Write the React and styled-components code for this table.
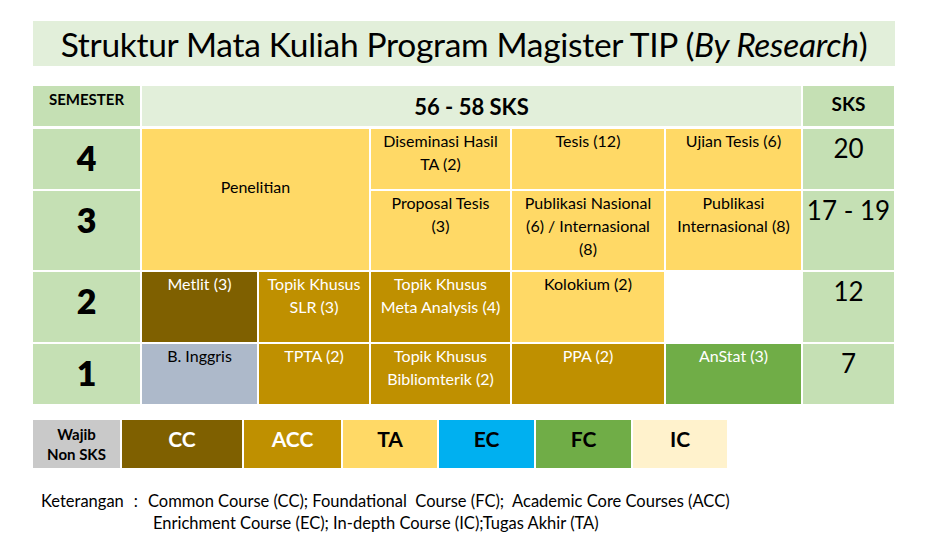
import React from 'react';
import styled, { createGlobalStyle } from 'styled-components';

const GlobalStyle = createGlobalStyle`
  body {
    margin: 0;
    background: #ffffff;
    font-family: Lato, "Open Sans", sans-serif;
    color: #000;
  }
`;

const colors = {
  cc: '#7F6000',
  acc: '#BF9000',
  ta: '#FFD966',
  ec: '#00B0F0',
  fc: '#70AD47',
  ic: '#FFF2CC',
  eng: '#ADB9CA',
  wajib: '#C9C9C9',
  sem: '#C5E0B4',
  head: '#E2EFDA',
  none: '#FFFFFF',
};

const Page = styled.div`
  width: 862px;
  padding: 21px 0 0 33px;
`;

const TitleBand = styled.h1`
  margin: 0;
  height: 45px;
  background: ${colors.head};
  display: flex;
  align-items: center;
  justify-content: center;
  font-weight: 400;
  font-size: 33.5px;
  letter-spacing: -0.3px;
  line-height: 1;
  padding-top: 2px;
  box-sizing: border-box;

  em {
    font-style: italic;
  }
`;

const Table = styled.div`
  margin-top: 20px;
  display: grid;
  grid-template-columns: 107px 115px 110px 139px 152px 135px 91px;
  grid-template-rows: 41px 60px 79px 70px 60px;
  row-gap: 2px;
  column-gap: 2px;
  background: #fff;
`;

const HeadCell = styled.div`
  background: ${(p) => p.bg};
  grid-column: ${(p) => p.col || 'auto'};
  display: flex;
  justify-content: center;
  align-items: ${(p) => (p.center ? 'center' : 'flex-start')};
  font-weight: 700;
  font-size: ${(p) => p.size}px;
  padding-top: ${(p) => p.pt || 0}px;
  box-sizing: border-box;
  margin-bottom: 1px;
`;

const SemCell = styled.div`
  background: ${colors.sem};
  grid-column: 1;
  display: flex;
  justify-content: center;
  font-weight: 800;
  font-size: 34px;
  line-height: 1;
  padding-top: 12px;
  box-sizing: border-box;
`;

const SksCell = styled.div`
  background: ${colors.sem};
  grid-column: 7;
  display: flex;
  justify-content: center;
  font-size: 26px;
  line-height: 1;
  padding-top: 6px;
  box-sizing: border-box;
`;

const Course = styled.div`
  background: ${(p) => colors[p.kind]};
  color: ${(p) => (p.light ? '#ffffff' : '#000000')};
  grid-column: ${(p) => p.col};
  grid-row: ${(p) => p.row};
  text-align: center;
  font-size: 16px;
  line-height: 23px;
  padding-top: ${(p) => p.pt || 0}px;
  box-sizing: border-box;
`;

const Legend = styled.div`
  margin-top: 16px;
  display: grid;
  grid-template-columns: 87px 120px 97px 94px 95px 95px 94px;
  column-gap: 2px;
  height: 48px;
`;

const LegendItem = styled.div`
  background: ${(p) => colors[p.kind]};
  color: ${(p) => (p.light ? '#ffffff' : '#000000')};
  display: flex;
  flex-direction: column;
  align-items: center;
  justify-content: center;
  font-weight: 700;
  font-size: ${(p) => (p.small ? 15 : 21)}px;
  line-height: ${(p) => (p.small ? 20 : 22)}px;
  padding-bottom: ${(p) => (p.small ? 0 : 10)}px;
  box-sizing: border-box;
`;

const Notes = styled.div`
  margin-top: 22px;
  margin-left: 8px;
  display: grid;
  grid-template-columns: auto auto 1fr;
  column-gap: 10px;
  font-size: 16.5px;
  line-height: 22px;
`;

const NoteLabel = styled.span`
  grid-row: 1;
`;

const NoteLines = styled.div`
  white-space: pre;
`;

const NoteLine = styled.div`
  padding-left: ${(p) => p.indent || 0}px;
`;

const semesters = [
  { sem: '4', sks: '20', row: 2 },
  { sem: '3', sks: '17 - 19', row: 3 },
  { sem: '2', sks: '12', row: 4 },
  { sem: '1', sks: '7', row: 5 },
];

const courses = [
  { col: '2 / 4', row: '2 / 4', kind: 'ta', lines: ['Penelitian'], pt: 46 },
  { col: 4, row: 2, kind: 'ta', lines: ['Diseminasi Hasil', 'TA (2)'] },
  { col: 5, row: 2, kind: 'ta', lines: ['Tesis (12)'] },
  { col: 6, row: 2, kind: 'ta', lines: ['Ujian Tesis (6)'] },
  { col: 4, row: 3, kind: 'ta', lines: ['Proposal Tesis', '(3)'] },
  { col: 5, row: 3, kind: 'ta', lines: ['Publikasi Nasional', '(6) / Internasional', '(8)'] },
  { col: 6, row: 3, kind: 'ta', lines: ['Publikasi', 'Internasional (8)'] },
  { col: 2, row: 4, kind: 'cc', light: true, lines: ['Metlit (3)'] },
  { col: 3, row: 4, kind: 'acc', light: true, lines: ['Topik Khusus', 'SLR (3)'] },
  { col: 4, row: 4, kind: 'acc', light: true, lines: ['Topik Khusus', 'Meta Analysis (4)'] },
  { col: 5, row: 4, kind: 'ta', lines: ['Kolokium (2)'] },
  { col: 6, row: 4, kind: 'none', lines: [] },
  { col: 2, row: 5, kind: 'eng', lines: ['B. Inggris'] },
  { col: 3, row: 5, kind: 'acc', light: true, lines: ['TPTA (2)'] },
  { col: 4, row: 5, kind: 'acc', light: true, lines: ['Topik Khusus', 'Bibliomterik (2)'] },
  { col: 5, row: 5, kind: 'acc', light: true, lines: ['PPA (2)'] },
  { col: 6, row: 5, kind: 'fc', light: true, lines: ['AnStat (3)'] },
];

const legend = [
  { kind: 'wajib', small: true, lines: ['Wajib', 'Non SKS'] },
  { kind: 'cc', light: true, lines: ['CC'] },
  { kind: 'acc', light: true, lines: ['ACC'] },
  { kind: 'ta', lines: ['TA'] },
  { kind: 'ec', lines: ['EC'] },
  { kind: 'fc', lines: ['FC'] },
  { kind: 'ic', lines: ['IC'] },
];

export default function App() {
  return (
    <Page>
      <GlobalStyle />
      <TitleBand>
        Struktur Mata Kuliah Program Magister TIP (<em>By Research</em>)
      </TitleBand>

      <Table>
        <HeadCell bg={colors.sem} size={15} pt={4}>SEMESTER</HeadCell>
        <HeadCell bg={colors.head} col="2 / 7" size={22} center>56 - 58 SKS</HeadCell>
        <HeadCell bg={colors.sem} size={19} pt={6}>SKS</HeadCell>

        {semesters.map((s) => (
          <React.Fragment key={s.sem}>
            <SemCell style={{ gridRow: s.row }}>{s.sem}</SemCell>
            <SksCell style={{ gridRow: s.row }}>{s.sks}</SksCell>
          </React.Fragment>
        ))}

        {courses.map((c, i) => (
          <Course key={i} col={c.col} row={c.row} kind={c.kind} light={c.light} pt={c.pt}>
            {c.lines.map((l) => (
              <div key={l}>{l}</div>
            ))}
          </Course>
        ))}
      </Table>

      <Legend>
        {legend.map((l) => (
          <LegendItem key={l.kind} kind={l.kind} light={l.light} small={l.small}>
            {l.lines.map((t) => (
              <span key={t}>{t}</span>
            ))}
          </LegendItem>
        ))}
      </Legend>

      <Notes>
        <NoteLabel>Keterangan</NoteLabel>
        <span>:</span>
        <NoteLines>
          <NoteLine>Common Course (CC); Foundational  Course (FC);  Academic Core Courses (ACC)</NoteLine>
          <NoteLine indent={5}>Enrichment Course (EC); In-depth Course (IC);Tugas Akhir (TA)</NoteLine>
        </NoteLines>
      </Notes>
    </Page>
  );
}
